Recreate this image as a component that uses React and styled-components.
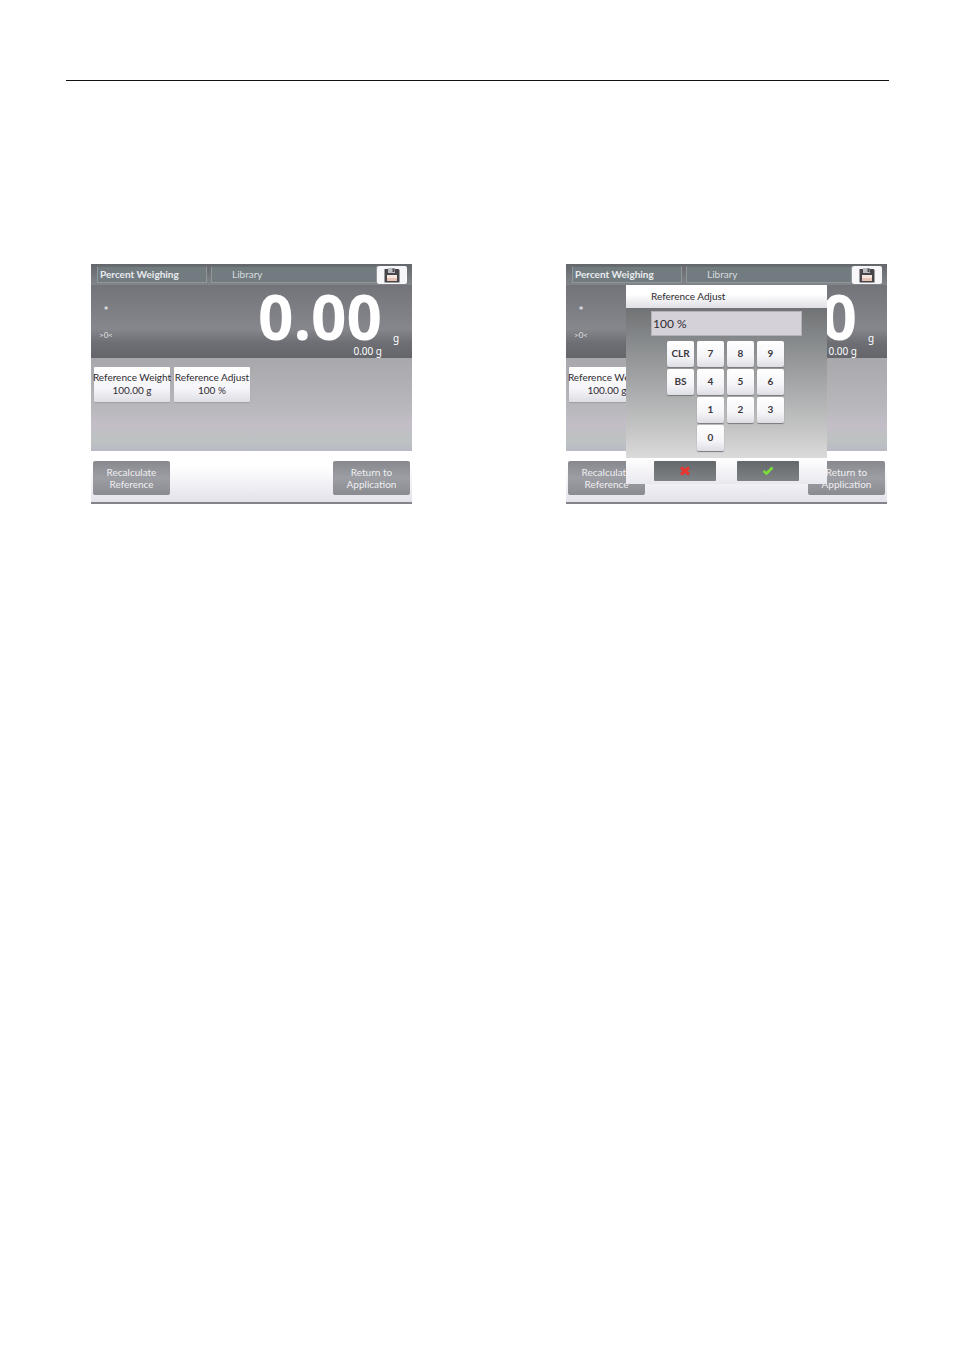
import React, { useState } from "react";
import styled, { createGlobalStyle } from "styled-components";

const GlobalStyle = createGlobalStyle`
  * {
    box-sizing: border-box;
  }
  body {
    margin: 0;
    background: #fff;
    font-family: Lato, "Open Sans", sans-serif;
  }
  button, input {
    font-family: inherit;
    margin: 0;
    padding: 0;
    border: none;
  }
`;

const keys = ["CLR", "7", "8", "9", "BS", "4", "5", "6", "", "1", "2", "3", "", "0"];

function SaveIcon() {
  return (
    <svg width="16" height="15" viewBox="0 0 16 15" aria-hidden="true">
      <path d="M0.500 1h14l1 1v12.500h-15z" fill="#47444a" />
      <rect x="4" y="0" width="7" height="5" fill="#b9bcc3" />
      <rect x="8.500" y="0.500" width="2" height="3.500" fill="#4f4c52" />
      <rect x="3" y="7" width="10" height="6" fill="#f3e5df" />
      <rect x="3" y="10" width="10" height="3" fill="#e6c3b4" />
    </svg>
  );
}

function CancelIcon() {
  return (
    <svg width="12" height="10" viewBox="0 0 12 10" aria-hidden="true">
      <path d="M2 1.500L10 8.500M10 1.500L2 8.500" stroke="#e8352f" strokeWidth="3" />
    </svg>
  );
}

function CheckIcon() {
  return (
    <svg width="12" height="10" viewBox="0 0 12 10" aria-hidden="true">
      <path d="M1.500 5L4.500 7.500L10.500 1.500" fill="none" stroke="#7be03a" strokeWidth="2.500" />
    </svg>
  );
}

function AdjustDialog() {
  const [value, setValue] = useState("100 %");

  return (
    <Dialog role="dialog">
      <DialogTitle htmlFor="adjust">Reference Adjust</DialogTitle>
      <DialogBody>
        <Field id="adjust" value={value} onChange={(e) => setValue(e.target.value)} />
        <Keypad>
          {keys.map((key, i) => (key ? <Key key={i}>{key}</Key> : <span key={i} />))}
        </Keypad>
      </DialogBody>
      <DialogActions>
        <Action aria-label="Cancel">
          <CancelIcon />
        </Action>
        <Action aria-label="Accept">
          <CheckIcon />
        </Action>
      </DialogActions>
    </Dialog>
  );
}

function Screen({ children }) {
  return (
    <Panel>
      <TopBar>
        <Mode>Percent Weighing</Mode>
        <Library>Library</Library>
        <Save aria-label="Save">
          <SaveIcon />
        </Save>
      </TopBar>
      <Display>
        <Status>
          <strong>*</strong>
          <span>&gt;0&lt;</span>
        </Status>
        <Weight>
          <strong>0.00</strong>
          <small>0.00 g</small>
        </Weight>
        <Unit>g</Unit>
      </Display>
      <Settings>
        <Setting>
          Reference Weight
          <span>100.00 g</span>
        </Setting>
        <Setting>
          Reference Adjust
          <span>100 %</span>
        </Setting>
      </Settings>
      <BottomBar>
        <Command>Recalculate Reference</Command>
        <Command>Return to Application</Command>
      </BottomBar>
      {children}
    </Panel>
  );
}

function App() {
  return (
    <Page>
      <GlobalStyle />
      <Rule />
      <Screens>
        <Screen />
        <Screen>
          <AdjustDialog />
        </Screen>
      </Screens>
    </Page>
  );
}

export default App;

const Page = styled.main`
  padding: 80px 65px 80px 66px;
`;

const Rule = styled.hr`
  margin: 0;
  border: none;
  border-top: 1px solid #111;
`;

const Screens = styled.div`
  display: grid;
  grid-template-columns: 1fr 1fr;
  gap: 154px;
  padding: 183px 2px 0 25px;
`;

const Panel = styled.section`
  position: relative;
  border-bottom: 2px solid #85838a;
`;

const TopBar = styled.header`
  display: flex;
  gap: 4px;
  height: 21px;
  padding: 2px 5px 2px 6px;
  background: linear-gradient(#64676c, #81858a);
`;

const Mode = styled.div`
  width: 110px;
  padding-left: 2px;
  border: 1px solid #90969b;
  border-top-color: #666d72;
  background: #727b80;
  color: #e9ebee;
  font-size: 10px;
  font-weight: 700;
  line-height: 15px;
`;

const Library = styled(Mode)`
  flex: 1;
  width: auto;
  padding-left: 20px;
  margin-right: -4px;
  color: #d8dcdf;
  font-weight: 400;
`;

const Save = styled.button`
  display: flex;
  align-items: center;
  justify-content: center;
  width: 30px;
  height: 18px;
  border-radius: 2px;
  background: #f7f7fa;
`;

const Display = styled.div`
  display: flex;
  height: 73px;
  background: linear-gradient(#72747a, #85878d 60%, #6c6e74 80%, #64666c);
  color: #fff;
`;

const Status = styled.div`
  display: flex;
  flex: 1;
  flex-direction: column;
  gap: 10px;
  padding: 18px 0 0 8px;
  color: #e4e5e8;
  font-size: 8px;
  line-height: 15px;

  strong {
    width: 14px;
    font-size: 12px;
    text-align: center;
  }
  span {
    width: 14px;
    text-align: center;
  }
`;

const Weight = styled.div`
  display: flex;
  flex-direction: column;
  align-items: flex-end;

  strong {
    font-family: "Open Sans", sans-serif;
    font-size: 62px;
    line-height: 62px;
  }
  small {
    font-family: "Noto Sans", sans-serif;
    font-size: 10px;
    line-height: 9px;
  }
`;

const Unit = styled.div`
  align-self: flex-end;
  width: 30px;
  padding: 0 0 12px 11px;
  font-family: "Noto Sans", sans-serif;
  font-size: 10px;
  line-height: 16px;
`;

const Settings = styled.div`
  display: flex;
  align-items: flex-start;
  gap: 4px;
  height: 93px;
  padding: 9px 3px;
  background: linear-gradient(#a8a8ac, #b9b9bd 55%, #c3bdc7 72%, #bdc2c2 88%, #b9bac4);
`;

const Setting = styled.button`
  display: flex;
  flex-direction: column;
  align-items: center;
  justify-content: center;
  width: 76px;
  height: 35px;
  padding-bottom: 2px;
  border-radius: 1px;
  background: linear-gradient(#fff, #f6f6fa 60%, #dedee5);
  box-shadow: 0 1px 1px #9d9da5;
  color: #2f2c31;
  font-size: 10px;
  line-height: 13px;
  white-space: nowrap;
`;

const BottomBar = styled.footer`
  display: flex;
  justify-content: space-between;
  height: 51px;
  padding: 10px 2px 7px;
  background: linear-gradient(#fff 30%, #e3e2eb);
`;

const Command = styled.button`
  width: 77px;
  padding: 0 8px;
  border-radius: 2px;
  background: linear-gradient(#87898e, #9c9ea3 50%, #8a8b90);
  color: #f0eff3;
  font-size: 10px;
  line-height: 12px;
`;

const Dialog = styled.div`
  position: absolute;
  top: 21px;
  right: 60px;
  left: 60px;
  background: #85888a;
`;

const DialogTitle = styled.label`
  display: block;
  height: 23px;
  padding-left: 25px;
  background: linear-gradient(#fff 40%, #dfdfe5);
  color: #2f2c31;
  font-size: 10px;
  line-height: 23px;
`;

const DialogBody = styled.div`
  height: 150px;
  padding: 3px 25px;
  background: linear-gradient(#707274, #85888a 20%, #c9c9c9 85%, #dbdbdb);
`;

const Field = styled.input`
  display: block;
  width: 100%;
  height: 25px;
  padding-left: 1px;
  border: 1px solid #b4b1b8;
  background: #d5d1d9;
  color: #2f2c31;
  font-size: 12px;
`;

const Keypad = styled.div`
  display: grid;
  grid-template-columns: repeat(4, 27px);
  gap: 2px 3px;
  justify-content: center;
  padding: 5px 2px 0 0;
`;

const Key = styled.button`
  height: 26px;
  padding-bottom: 2px;
  border-radius: 2px;
  background: linear-gradient(#fff, #f5f5f9 60%, #dddde4);
  box-shadow: 0 1px 1px #77797c;
  color: #3b383d;
  font-size: 10px;
  font-weight: 700;
`;

const DialogActions = styled.div`
  display: flex;
  justify-content: space-between;
  height: 26px;
  padding: 3px 28px;
  background: linear-gradient(#fff, #e8e8ef);
`;

const Action = styled.button`
  display: flex;
  align-items: center;
  justify-content: center;
  width: 62px;
  height: 20px;
  border-radius: 1px;
  background: linear-gradient(#65686b, #7f8285);
`;
